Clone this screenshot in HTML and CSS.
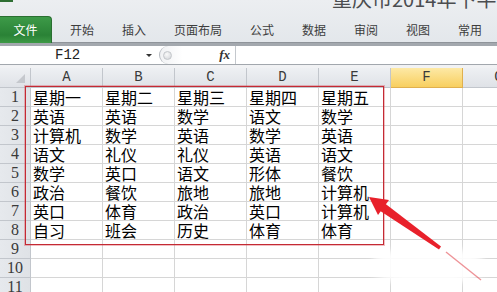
FILE: index.html
```html
<!DOCTYPE html>
<html lang="zh">
<head>
<meta charset="utf-8">
<link rel="stylesheet" href="styles.css">
</head>
<body>
<div class="app">
  <div class="ribbon">
    <div class="titlebar"><div class="appicon"></div><div class="title">重庆市2014年下半年课程表</div></div>
    <div class="tabs">
      <div class="tab file">文件</div>
      <div class="tab first">开始</div>
      <div class="tab">插入</div>
      <div class="tab">页面布局</div>
      <div class="tab">公式</div>
      <div class="tab">数据</div>
      <div class="tab">审阅</div>
      <div class="tab">视图</div>
      <div class="tab">常用</div>
    </div>
  </div>
  <div class="fbar">
    <div class="namebox"><span class="nametext">F12</span><span class="ddarrow"></span></div>
    <div class="fxbox"><span class="grip"></span><span class="fx">fx</span></div>
    <div class="finput"></div>
  </div>
  <div class="gap"></div>
  <div class="sheet">
    <div class="corner"><span class="tri"></span></div>
    <div class="ch">A</div><div class="ch">B</div><div class="ch">C</div><div class="ch">D</div><div class="ch">E</div><div class="ch sel">F</div><div class="ch">G</div>

    <div class="rh">1</div><div class="c">星期一</div><div class="c">星期二</div><div class="c">星期三</div><div class="c">星期四</div><div class="c">星期五</div><div class="c"></div><div class="c"></div>
    <div class="rh">2</div><div class="c">英语</div><div class="c">英语</div><div class="c">数学</div><div class="c">语文</div><div class="c">数学</div><div class="c"></div><div class="c"></div>
    <div class="rh">3</div><div class="c">计算机</div><div class="c">数学</div><div class="c">英语</div><div class="c">数学</div><div class="c">英语</div><div class="c"></div><div class="c"></div>
    <div class="rh">4</div><div class="c">语文</div><div class="c">礼仪</div><div class="c">礼仪</div><div class="c">英语</div><div class="c">语文</div><div class="c"></div><div class="c"></div>
    <div class="rh">5</div><div class="c">数学</div><div class="c">英口</div><div class="c">语文</div><div class="c">形体</div><div class="c">餐饮</div><div class="c"></div><div class="c"></div>
    <div class="rh">6</div><div class="c">政治</div><div class="c">餐饮</div><div class="c">旅地</div><div class="c">旅地</div><div class="c">计算机</div><div class="c"></div><div class="c"></div>
    <div class="rh">7</div><div class="c">英口</div><div class="c">体育</div><div class="c">政治</div><div class="c">英口</div><div class="c">计算机</div><div class="c"></div><div class="c"></div>
    <div class="rh">8</div><div class="c">自习</div><div class="c">班会</div><div class="c">历史</div><div class="c">体育</div><div class="c">体育</div><div class="c"></div><div class="c"></div>
    <div class="rh">9</div><div class="c"></div><div class="c"></div><div class="c"></div><div class="c"></div><div class="c"></div><div class="c"></div><div class="c"></div>
    <div class="rh">10</div><div class="c"></div><div class="c"></div><div class="c"></div><div class="c"></div><div class="c"></div><div class="c"></div><div class="c"></div>
    <div class="rh">11</div><div class="c"></div><div class="c"></div><div class="c"></div><div class="c"></div><div class="c"></div><div class="c"></div><div class="c"></div>
  </div>

  <div class="redbox"></div>
  <div class="blob"></div>
  <svg class="arrow" width="497" height="292" viewBox="0 0 497 292">
    <polygon points="369,197 389,200 378,215" fill="#e8212b"/>
    <polygon points="385,203.5 441,246.6 439,249.4 379.5,210.5" fill="#e8212b"/>
    <line x1="446" y1="252" x2="481" y2="280" stroke="#e03a44" stroke-opacity="0.55" stroke-width="1.4"/>
  </svg>
</div>
</body>
</html>
```
FILE: styles.css
```css
* { box-sizing: border-box; }
html, body { margin: 0; padding: 0; }
body { width: 497px; height: 292px; overflow: hidden; background: #fff; }
.app { position: relative; width: 497px; height: 292px; overflow: hidden; font-family: "Noto Sans CJK SC", "Noto Sans", sans-serif; }

.ribbon {
  background: linear-gradient(#eceef1, #e3e7eb);
  border-bottom: 3px solid #a3a8ae;
  box-shadow: inset 0 -1px 0 #8f949a;
}
.titlebar { height: 15px; display: flex; overflow: hidden; }
.appicon { width: 13px; height: 2px; background: #2e6e33; flex: none; }
.title {
  margin-left: 319px; margin-top: -11px;
  font-size: 20px; line-height: 20px; color: #4b4d50; white-space: nowrap;
}
.tabs { height: 28px; display: flex; align-items: flex-end; gap: 28px; }
.tab { font-size: 12px; line-height: 12px; color: #3d3d3d; padding-bottom: 7px; white-space: nowrap; }
.tab.file {
  width: 52px; height: 27px; padding: 0; display: flex; align-items: center; justify-content: center;
  color: #fff; background: linear-gradient(#3d9a48, #2a8236 70%, #3e9a46);
  border: 1px solid #2a6f31; border-bottom: none; border-left: none;
  border-radius: 0 4px 0 0;
}
.tab.first { margin-left: -10px; }

.fbar { height: 19px; display: flex; border-bottom: 1px solid #a2a7ad; background: #fff; }
.namebox { width: 156px; display: flex; align-items: center; padding-left: 55px; padding-right: 4px; }
.nametext { font-family: "Liberation Mono", monospace; font-size: 14px; line-height: 16px; color: #222; }
.ddarrow {
  margin-left: auto; width: 0; height: 0;
  border-left: 3px solid transparent; border-right: 3px solid transparent; border-top: 3px solid #333;
}
.fxbox {
  margin-left: 3px; width: 77px; height: 18px; display: flex; align-items: center; padding-left: 3px; padding-right: 5px;
  border-left: 1px solid #b5b9bf; border-right: 1px solid #c4c8cd;
  border-radius: 9px 0 0 9px;
  background: linear-gradient(90deg, #f1f2f4, #fff 30%);
}
.grip {
  width: 9px; height: 9px; border-radius: 50%;
  background: radial-gradient(circle at 40% 35%, #fafafa, #cfd2d6);
  border: 1px solid #c3c6ca;
}
.fx { margin-left: auto; font-family: "Liberation Serif", serif; font-style: italic; font-weight: bold; font-size: 13px; line-height: 14px; color: #333; }
.finput { flex: 1; }
.gap { height: 3px; background: #f1f2f4; }

.sheet {
  display: grid;
  grid-template-columns: 31px repeat(7, 72px);
  grid-template-rows: 20px repeat(11, 19px);
}
.corner, .ch, .rh {
  background: linear-gradient(#eef0f3, #dfe2e7);
  border-right: 1px solid #c2c6cc; border-bottom: 1px solid #c2c6cc;
  color: #3a3a3a;
}
.corner { position: relative; }
.tri {
  position: absolute; right: 5px; bottom: 4px; width: 0; height: 0;
  border-left: 9px solid transparent; border-bottom: 9px solid #c5c8cd;
}
.ch {
  font-family: "Liberation Mono", monospace; font-size: 14px; line-height: 19px; text-align: center;
}
.ch.sel {
  background: linear-gradient(#fde9a6, #f8cf5f);
  border-right-color: #e0b04e; border-bottom-color: #e0b04e;
  color: #3a3a3a;
}
.rh {
  background: linear-gradient(90deg, #e6e9ed, #dfe2e6);
  font-family: "Liberation Serif", serif; font-size: 16px; line-height: 18px; text-align: center;
}
.c {
  border-right: 1px solid #d6d6d6; border-bottom: 1px solid #d6d6d6;
  font-size: 16px; line-height: 18px; padding-left: 2px; color: #000; white-space: nowrap;
}

.redbox {
  position: absolute; left: 25px; top: 86px; width: 359px; height: 159px;
  border: 1px solid #c42a34;
  box-shadow: 0 0 0 1px rgba(214, 70, 80, 0.35);
}
.blob {
  position: absolute; left: 372px; top: 248px; width: 112px; height: 36px;
  background: #fff; border-radius: 40%; filter: blur(3px); opacity: 0.92;
}
.arrow { position: absolute; left: 0; top: 0; pointer-events: none; }
```
